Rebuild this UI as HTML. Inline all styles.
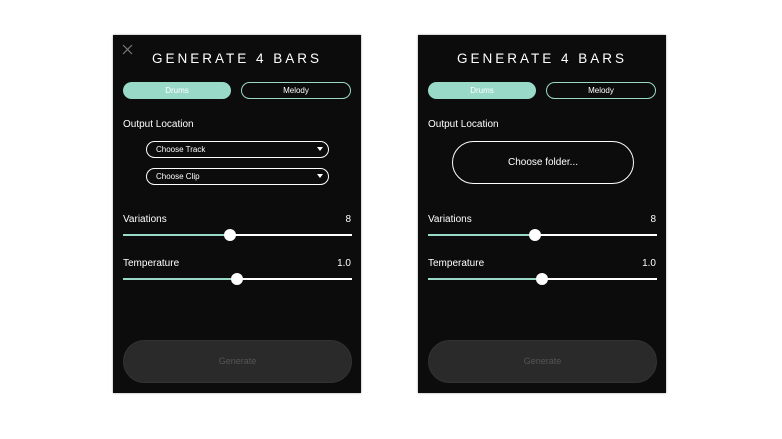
<!DOCTYPE html>
<html><head><style>
body{margin:0;width:782px;height:439px;background:#fff;position:relative;overflow:hidden;font-family:"Liberation Sans",sans-serif;}
.p{position:absolute;top:35px;width:248px;height:358px;background:#0c0c0c;box-shadow:0 0 2px rgba(0,0,0,.4);}
.a{position:absolute;}
.t{left:0;width:248px;top:16px;text-align:center;color:#fff;font-size:13.5px;letter-spacing:3px;}
.btn{border-radius:9px;height:17px;box-sizing:border-box;font-size:8px;text-align:center;line-height:15px;}
.dr{background:#98dac7;color:#fff;border:1px solid #98dac7;left:10px;width:108px;top:47px;}
.me{border:1.5px solid #98dac7;color:#fff;left:128px;width:110px;top:47px;}
.lbl{color:#fff;font-size:10px;}
.dd{left:33px;width:183px;height:17px;border:1.5px solid #fff;border-radius:9px;box-sizing:border-box;color:#fff;font-size:8px;line-height:15px;padding-left:9px;}
.dd:after{content:"";position:absolute;right:5px;top:5px;border-left:3.5px solid transparent;border-right:3.5px solid transparent;border-top:4px solid #fff;}
.tr{left:10px;width:229px;height:2px;background:#fff;}
.th{width:12px;height:12px;border-radius:50%;background:#fff;}
.gen{left:10px;width:229px;top:305px;height:43px;border-radius:22px;background:#2a2a2a;border:1px solid #333;box-sizing:border-box;color:#555;font-size:9px;text-align:center;line-height:41px;}
</style></head><body>

<div class="p" style="left:113px">
<svg class="a" style="left:9px;top:9px" width="11" height="11"><path d="M1 1L10 10M10 1L1 10" stroke="#777" stroke-width="1.2"/></svg>
<div class="a t">GENERATE 4 BARS</div>
<div class="a btn dr">Drums</div>
<div class="a btn me">Melody</div>
<div class="a lbl" style="left:10px;top:84px">Output Location</div>
<div class="a dd" style="top:106px">Choose Track</div>
<div class="a dd" style="top:133px">Choose Clip</div>
<div class="a lbl" style="left:10px;top:179px">Variations</div>
<div class="a lbl" style="right:10px;top:179px">8</div>
<div class="a tr" style="top:199px;background:linear-gradient(90deg,#98dac7 47%,#fff 47%)"></div>
<div class="a th" style="left:111px;top:194px"></div>
<div class="a lbl" style="left:10px;top:223px">Temperature</div>
<div class="a lbl" style="right:10px;top:223px">1.0</div>
<div class="a tr" style="top:243px;background:linear-gradient(90deg,#98dac7 50%,#fff 50%)"></div>
<div class="a th" style="left:118px;top:238px"></div>
<div class="a gen">Generate</div>
</div>

<div class="p" style="left:418px">
<div class="a t">GENERATE 4 BARS</div>
<div class="a btn dr">Drums</div>
<div class="a btn me">Melody</div>
<div class="a lbl" style="left:10px;top:84px">Output Location</div>
<div class="a" style="left:34px;top:106px;width:182px;height:43px;border:1.5px solid #fff;border-radius:22px;box-sizing:border-box;color:#fff;font-size:10px;text-align:center;line-height:41px">Choose folder...</div>
<div class="a lbl" style="left:10px;top:179px">Variations</div>
<div class="a lbl" style="right:10px;top:179px">8</div>
<div class="a tr" style="top:199px;background:linear-gradient(90deg,#98dac7 47%,#fff 47%)"></div>
<div class="a th" style="left:111px;top:194px"></div>
<div class="a lbl" style="left:10px;top:223px">Temperature</div>
<div class="a lbl" style="right:10px;top:223px">1.0</div>
<div class="a tr" style="top:243px;background:linear-gradient(90deg,#98dac7 50%,#fff 50%)"></div>
<div class="a th" style="left:118px;top:238px"></div>
<div class="a gen">Generate</div>
</div>
</body></html>
